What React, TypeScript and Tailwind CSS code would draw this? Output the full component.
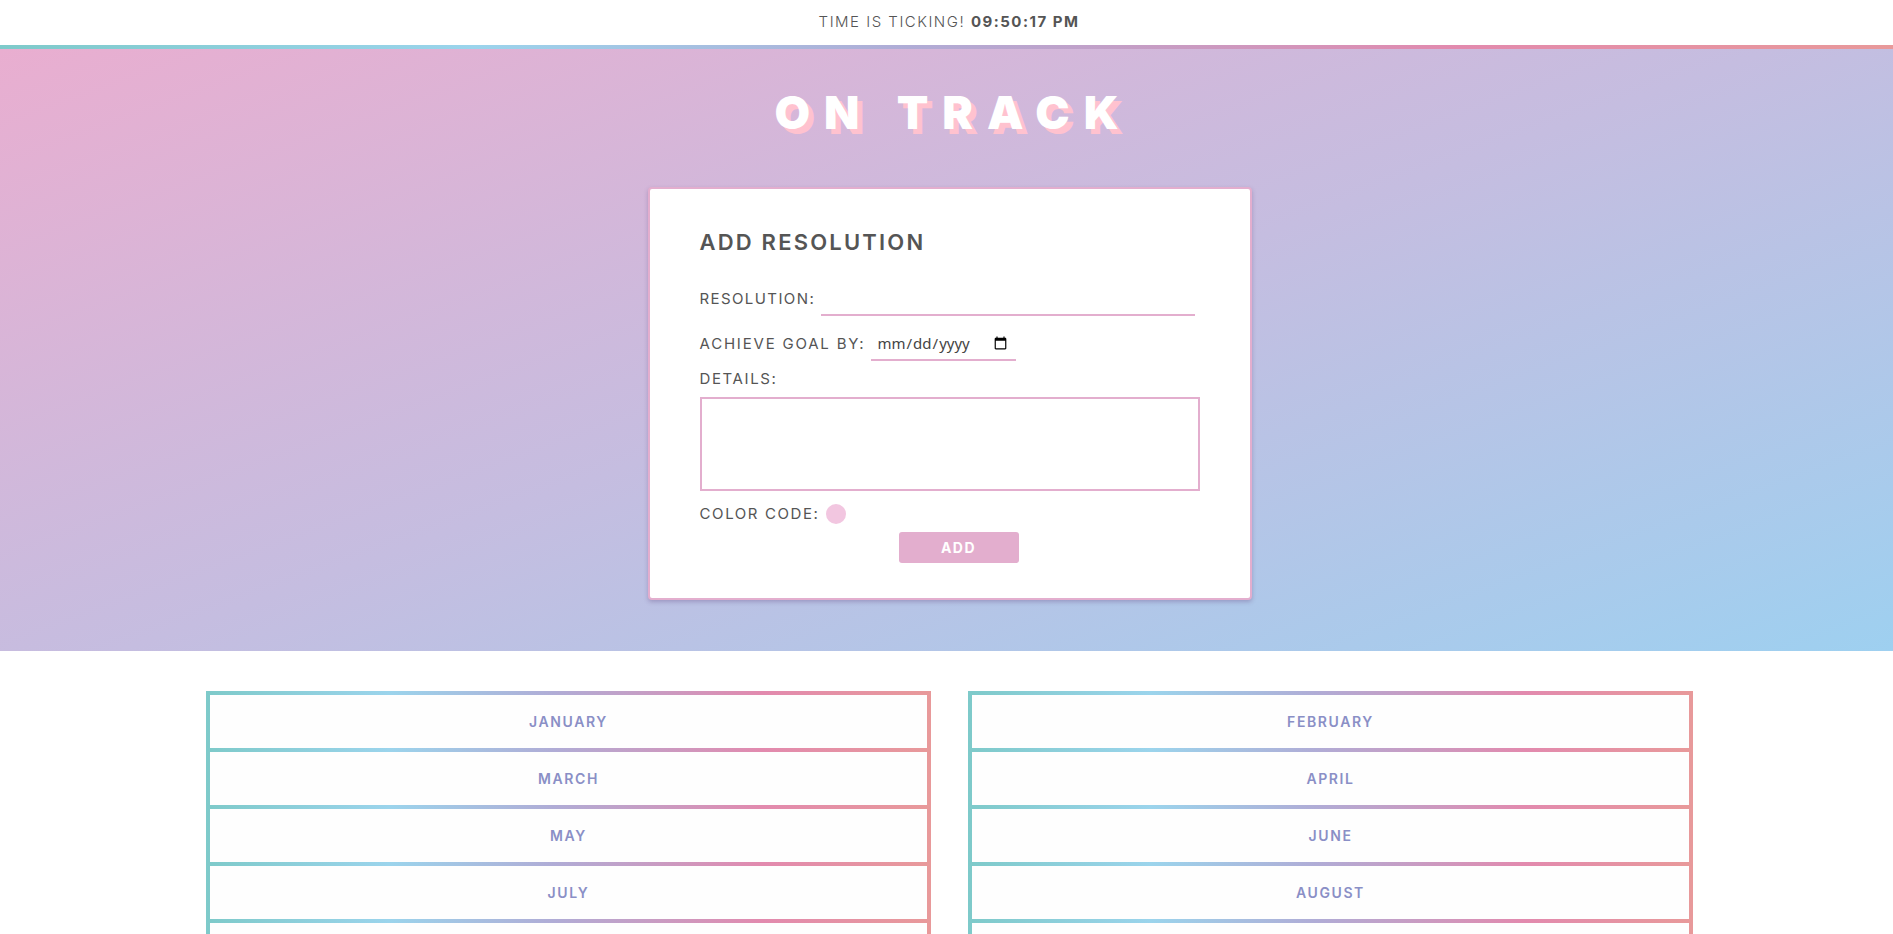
const months = [
  "January", "February", "March", "April", "May", "June",
  "July", "August", "September", "October", "November", "December",
];

const rowBorder =
  "[border-image:linear-gradient(to_right,#7ecaca_0%,#9bd4ec_25%,#b0acd6_48%,#e28aae_77%,#e8999a_100%)_1]";

const MonthColumn = ({ items }: { items: string[] }) => (
  <div className="flex flex-col">
    {items.map((m, i) => (
      <div
        key={m}
        className={`h-[57px] border-x-4 border-t-4 border-solid ${rowBorder} ${
          i === items.length - 1 ? "border-b-4 h-[61px]" : ""
        } flex items-center justify-center bg-[#fefefe]`}
      >
        <span className="text-[14px] font-semibold tracking-[1.6px] uppercase text-[#8a8fc6]">{m}</span>
      </div>
    ))}
  </div>
);

const App = () => {
  const left = months.filter((_, i) => i % 2 === 0);
  const right = months.filter((_, i) => i % 2 === 1);

  return (
    <div className="min-h-screen bg-white font-['Inter',sans-serif] text-[#555]">
      {/* clock bar */}
      <div className="h-[45px] flex items-center justify-center pl-[5px] text-[15px] tracking-[1.5px]">
        <span className="font-light">TIME IS TICKING!&nbsp;</span>
        <span className="font-bold">09:50:17 PM</span>
      </div>
      <div className="h-[4px] bg-[linear-gradient(to_right,#7ecaca_0%,#9bd4ec_25%,#b0acd6_48%,#e28aae_77%,#e8999a_100%)]" />

      {/* hero */}
      <div className="h-[602px] bg-[linear-gradient(160deg,#e9aed0_0%,#c5bde0_50%,#9ed0f0_100%)] flex flex-col items-center pt-[35px] pl-[6px]">
        <h1 className="h-[56px] leading-[56px] text-[46px] font-black tracking-[14px] pl-[8px] text-white [text-shadow:5px_5px_0_#ffc2cf]">
          ON TRACK
        </h1>

        <div className="mt-[47px] w-[604px] bg-white border-2 border-[#e3aece] rounded-[4px] shadow-[0_2px_4px_rgba(120,100,150,0.45)] pt-[38px] px-[50px] pb-[35px]">
          <h2 className="text-[22px] leading-[30px] font-semibold tracking-[2.2px]">ADD RESOLUTION</h2>

          <div className="mt-[25px] flex items-center h-[34px]">
            <label className="text-[15px] leading-6 tracking-[1.4px]">RESOLUTION:</label>
            <input type="text" className="ml-[6px] mr-[5px] flex-1 h-[34px] border-b-2 border-[#e3aece] outline-none" />
          </div>

          <div className="mt-[11px] flex items-center h-[34px]">
            <label className="text-[15px] leading-6 tracking-[1.8px]">ACHIEVE GOAL BY:</label>
            <input
              type="date"
              className="ml-[6px] w-[145px] h-[34px] pl-[5px] pr-[6px] border-b-2 border-[#e3aece] text-[15px] text-[#444] font-['Noto_Sans',sans-serif] outline-none"
            />
          </div>

          <div className="mt-[6px] text-[15px] leading-6 tracking-[1.6px]">DETAILS:</div>
          <textarea className="mt-[6px] block w-[500px] h-[94px] border-2 border-[#e3aece] outline-none resize-none" />

          <div className="mt-[11px] flex items-center h-6">
            <span className="text-[15px] leading-6 tracking-[1.6px]">COLOR CODE:</span>
            <span className="ml-[6px] w-[20px] h-[20px] rounded-full bg-[#f2c6e0]" />
          </div>

          <div className="mt-[6px] flex justify-center pl-[18px]">
            <button className="w-[120px] h-[31px] rounded-[3px] bg-[#e3aece] text-white text-[14px] font-bold tracking-[1.5px]">
              ADD
            </button>
          </div>
        </div>
      </div>

      {/* months */}
      <div className="pl-[6px]">
        <div className="mt-[40px] mx-auto w-[1487px] grid grid-cols-2 gap-x-[37px] pb-10">
          <MonthColumn items={left} />
          <MonthColumn items={right} />
        </div>
      </div>
    </div>
  );
};

export default App;
